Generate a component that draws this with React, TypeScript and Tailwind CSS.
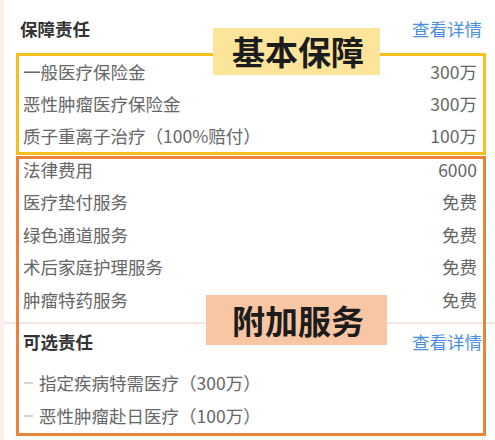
const basic = [
  ['一般医疗保险金', '300万'],
  ['恶性肿瘤医疗保险金', '300万'],
  ['质子重离子治疗（100%赔付）', '100万'],
]

const extra = [
  ['法律费用', '6000'],
  ['医疗垫付服务', '免费'],
  ['绿色通道服务', '免费'],
  ['术后家庭护理服务', '免费'],
  ['肿瘤特药服务', '免费'],
]

const optional = ['指定疾病特需医疗（300万）', '恶性肿瘤赴日医疗（100万）']

function Row({ name, value, h }: { name: string; value: string; h: string }) {
  return (
    <div className={`flex items-center justify-between ${h}`}>
      <span>{name}</span>
      <span>{value}</span>
    </div>
  )
}

export default function App() {
  return (
    <div
      className="relative isolate w-[495px] h-[440px] overflow-hidden bg-white border-l-[4px] border-[#fbefea] pl-[12px] pr-[9px] pt-[9px] text-[17.5px] leading-none text-[#666]"
      style={{ fontFamily: '"Noto Sans CJK SC", "Noto Sans", sans-serif' }}
    >
      {/* 保障责任 */}
      <div className="flex items-center justify-between h-[40px] pl-[4px] pr-[4px]">
        <span className="font-bold text-[#333]">保障责任</span>
        <span className="text-[#4a8fe2]">查看详情</span>
      </div>

      <div className="mt-[4px] border-[3px] border-[#f4c01e] pl-[4px] pr-[6px]">
        {basic.map(([n, v]) => (
          <Row key={n} name={n} value={v} h="h-[32px]" />
        ))}
      </div>

      <div className="mt-[1px] border-[3px] border-[#e8843b] pl-[4px] pr-[6px] pb-[1px]">
        <div className="-mt-[6px]">
          {extra.map(([n, v]) => (
            <Row key={n} name={n} value={v} h="h-[32.5px]" />
          ))}
        </div>

        <div className="relative -z-10 mt-[6.5px] h-[2px] ml-[-23px] mr-[-18px] bg-[#f9e6df]" />

        {/* 可选责任 */}
        <div className="flex items-center justify-between h-[36px] pr-[0px]">
          <span className="font-bold text-[#333]">可选责任</span>
          <span className="text-[#4a8fe2] -mr-[5px]">查看详情</span>
        </div>
        <div className="pt-[6px]">
          {optional.map((t) => (
            <div key={t} className="flex items-center h-[33px]">
              <span className="w-[9px] h-[2px] bg-[#d4d4d4] ml-[1px] mr-[6px]" />
              <span>{t}</span>
            </div>
          ))}
        </div>
      </div>

      {/* annotation labels */}
      <div className="absolute left-[209px] top-[28px] w-[167px] h-[47px] bg-[#fde49b] flex items-center pl-[19px] text-[33px] font-bold text-[#1c1c1c]">
        基本保障
      </div>
      <div className="absolute left-[202px] top-[295px] w-[181px] h-[50px] bg-[#f8c6a2] flex items-center pl-[26px] text-[33px] font-bold text-[#1c1c1c]">
        附加服务
      </div>
    </div>
  )
}
